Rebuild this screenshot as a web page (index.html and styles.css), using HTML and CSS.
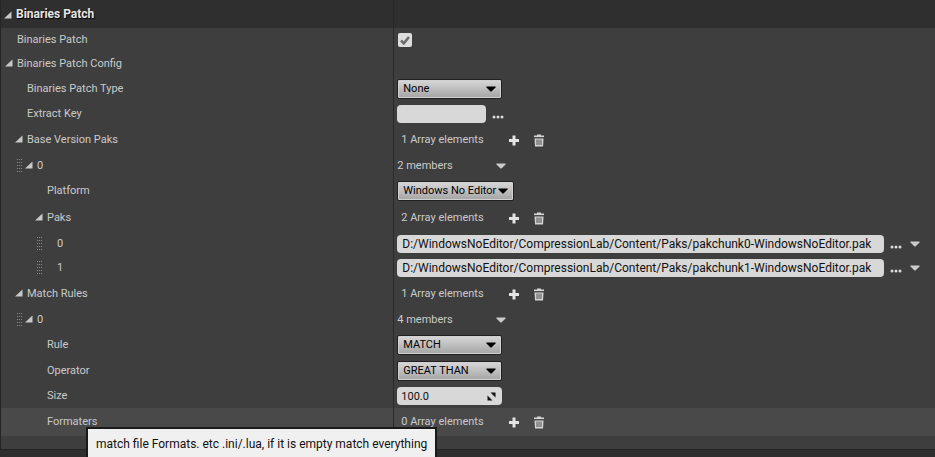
FILE: index.html
```html
<!DOCTYPE html>
<html lang="en">
<head>
<meta charset="utf-8">
<title>Binaries Patch</title>
<link rel="stylesheet" href="styles.css">
</head>
<body>
<svg class="defs" aria-hidden="true">
  <symbol id="tri" viewBox="0 0 8 8"><path d="M7.500 0.500V7.500H0z" fill="#c8c8c8"/></symbol>
  <symbol id="down" viewBox="0 0 10 6"><path d="M0.500 0.500h9v1L5.500 5.500h-1L0.500 1.500z" fill="currentColor"/></symbol>
  <symbol id="plus" viewBox="0 0 12 12"><path d="M4.500 1h3v3.500H11v3H7.500V11h-3V7.500H1v-3h3.500z" fill="#e4e4e4"/></symbol>
  <symbol id="trash" viewBox="0 0 12 13"><path d="M4 1.500V.5h4v1h3V4H1V1.500z" fill="#d4d4d4"/><path d="M1.500 4.500h9L10 12.500H2z" fill="#d4d4d4"/><path d="M1 3.500h10M4 5.500v5.500M6 5.500v5.500M8 5.500v5.500" stroke="#3e3e3e" stroke-width="0.900"/></symbol>
  <symbol id="dots" viewBox="0 0 12 4"><circle cx="2" cy="2" r="1.500"/><circle cx="6" cy="2" r="1.500"/><circle cx="10" cy="2" r="1.500"/></symbol>
  <symbol id="grip" viewBox="0 0 5 14"><path d="M.5 0v14M2.500 0v14M4.500 0v14" stroke="#8a8a8a" stroke-dasharray="1 2"/></symbol>
</svg>
<main class="panel">
  <header class="row heading">
    <div class="name l0"><button class="toggle" aria-label="Collapse Binaries Patch"><svg><use href="#tri"/></svg></button><h1>Binaries Patch</h1></div>
    <div class="value"></div>
  </header>
  <div class="row">
    <div class="name l0 leaf"><label for="patch">Binaries Patch</label></div>
    <div class="value"><span class="check"><input type="checkbox" id="patch" checked><svg viewBox="0 0 14 14"><path d="M3 7.500l2.800 2.800L11 4" fill="none" stroke="#6c6c6c" stroke-width="2.500"/></svg></span></div>
  </div>
  <div class="row">
    <div class="name l0"><button class="toggle" aria-label="Collapse Binaries Patch Config"><svg><use href="#tri"/></svg></button><span>Binaries Patch Config</span></div>
    <div class="value"></div>
  </div>
  <div class="row mid">
    <div class="name l1 leaf"><label for="type">Binaries Patch Type</label></div>
    <div class="value"><span class="combo"><select id="type"><option>None</option></select><svg><use href="#down"/></svg></span></div>
  </div>
  <div class="row">
    <div class="name l1 leaf"><label for="key">Extract Key</label></div>
    <div class="value"><input class="text short" type="text" id="key"><button class="more" aria-label="Browse"><svg><use href="#dots"/></svg></button></div>
  </div>
  <div class="row tall">
    <div class="name l1"><button class="toggle" aria-label="Collapse Base Version Paks"><svg><use href="#tri"/></svg></button><span>Base Version Paks</span></div>
    <div class="value array"><span class="count">1 Array elements</span><button class="tool" aria-label="Add element"><svg><use href="#plus"/></svg></button><button class="tool" aria-label="Remove all"><svg><use href="#trash"/></svg></button></div>
  </div>
  <div class="row">
    <div class="name g2"><svg class="grip"><use href="#grip"/></svg><button class="toggle" aria-label="Collapse element 0"><svg><use href="#tri"/></svg></button><span>0</span></div>
    <div class="value"><span class="members">2 members</span><button class="menu" aria-label="Element options"><svg><use href="#down"/></svg></button></div>
  </div>
  <div class="row mid">
    <div class="name l3 leaf"><label for="platform">Platform</label></div>
    <div class="value"><span class="combo wide"><select id="platform"><option>Windows No Editor</option></select><svg><use href="#down"/></svg></span></div>
  </div>
  <div class="row tall">
    <div class="name l3"><button class="toggle" aria-label="Collapse Paks"><svg><use href="#tri"/></svg></button><span>Paks</span></div>
    <div class="value array"><span class="count">2 Array elements</span><button class="tool" aria-label="Add element"><svg><use href="#plus"/></svg></button><button class="tool" aria-label="Remove all"><svg><use href="#trash"/></svg></button></div>
  </div>
  <div class="row">
    <div class="name g4 leaf"><svg class="grip"><use href="#grip"/></svg><label for="pak0">0</label></div>
    <div class="value"><input class="text path" type="text" id="pak0" value="D:/WindowsNoEditor/CompressionLab/Content/Paks/pakchunk0-WindowsNoEditor.pak"><button class="more" aria-label="Browse"><svg><use href="#dots"/></svg></button><button class="menu" aria-label="Element options"><svg><use href="#down"/></svg></button></div>
  </div>
  <div class="row">
    <div class="name g4 leaf"><svg class="grip"><use href="#grip"/></svg><label for="pak1">1</label></div>
    <div class="value"><input class="text path" type="text" id="pak1" value="D:/WindowsNoEditor/CompressionLab/Content/Paks/pakchunk1-WindowsNoEditor.pak"><button class="more" aria-label="Browse"><svg><use href="#dots"/></svg></button><button class="menu" aria-label="Element options"><svg><use href="#down"/></svg></button></div>
  </div>
  <div class="row tall">
    <div class="name l1"><button class="toggle" aria-label="Collapse Match Rules"><svg><use href="#tri"/></svg></button><span>Match Rules</span></div>
    <div class="value array"><span class="count">1 Array elements</span><button class="tool" aria-label="Add element"><svg><use href="#plus"/></svg></button><button class="tool" aria-label="Remove all"><svg><use href="#trash"/></svg></button></div>
  </div>
  <div class="row">
    <div class="name g2"><svg class="grip"><use href="#grip"/></svg><button class="toggle" aria-label="Collapse rule 0"><svg><use href="#tri"/></svg></button><span>0</span></div>
    <div class="value"><span class="members">4 members</span><button class="menu" aria-label="Element options"><svg><use href="#down"/></svg></button></div>
  </div>
  <div class="row mid">
    <div class="name l3 leaf"><label for="rule">Rule</label></div>
    <div class="value"><span class="combo"><select id="rule"><option>MATCH</option></select><svg><use href="#down"/></svg></span></div>
  </div>
  <div class="row mid">
    <div class="name l3 leaf"><label for="operator">Operator</label></div>
    <div class="value"><span class="combo"><select id="operator"><option>GREAT THAN</option></select><svg><use href="#down"/></svg></span></div>
  </div>
  <div class="row">
    <div class="name l3 leaf"><label for="size">Size</label></div>
    <div class="value"><span class="spin"><input class="text" type="text" inputmode="decimal" id="size" value="100.0"><svg viewBox="0 0 9 9"><path d="M3.500 0.500H8.500V5.500zM0.500 3.500L5.500 8.500H0.500z" fill="#111"/></svg></span></div>
  </div>
  <div class="row tall hover">
    <div class="name l3 leaf"><span>Formaters</span></div>
    <div class="value array"><span class="count">0 Array elements</span><button class="tool" aria-label="Add element"><svg><use href="#plus"/></svg></button><button class="tool" aria-label="Remove all"><svg><use href="#trash"/></svg></button></div>
    <div class="tooltip" role="tooltip">match file Formats. etc .ini/.lua, if it is empty match everything</div>
  </div>
</main>
</body>
</html>
```
FILE: styles.css
```css
* { box-sizing: border-box; }

html { height: 100%; overflow: hidden; }

body {
  margin: 0;
  min-height: 100%;
  overflow: hidden;
  background: #2e2e2e;
  color: #cacaca;
  font: 11px/16px Roboto, sans-serif;
}

.defs { position: absolute; width: 0; height: 0; }

svg { display: block; flex: none; }

button {
  display: flex;
  align-items: center;
  flex: none;
  margin: 0;
  padding: 0;
  border: 0;
  background: none;
  color: inherit;
}

.panel {
  padding-bottom: 13px;
  border-left: 1px solid #252525;
  border-bottom: 1px solid #242424;
  background: #3e3e3e;
}

.row {
  position: relative;
  display: grid;
  grid-template-columns: 42% 1fr;
  height: 24px;
}

.mid { height: 26px; }
.tall, .heading { height: 28px; }
.heading { background: #2f2f2f; }
.hover { background: #494949; }

.name, .value { display: flex; align-items: center; min-width: 0; }

.value {
  padding-left: 3px;
  border-left: 1px solid #292929;
}

.l0 { padding-left: 4px; }
.l1 { padding-left: 14px; }
.l3 { padding-left: 34px; }
.g2 { padding-left: 16px; }
.g4 { padding-left: 36px; }

.leaf > label, .leaf > span { margin-left: 12px; }

.heading .name { padding-left: 3px; }

h1 {
  margin: 0;
  color: #e6e6e6;
  font-size: 12px;
  font-weight: 700;
  text-shadow: 1px 1px 1px #000;
}

.toggle { width: 12px; height: 16px; align-items: flex-start; padding-top: 3px; }
.toggle svg { width: 8px; height: 8px; }
.heading .toggle { padding-top: 5px; }

.grip { width: 5px; height: 14px; margin-right: 3px; }

.check { display: grid; margin-left: 1px; }
.check input, .check svg { grid-area: 1 / 1; width: 14px; height: 14px; }
.check input { appearance: none; margin: 0; border-radius: 2px; background: #dedede; }
.check svg { pointer-events: none; }

.combo {
  display: grid;
  align-items: center;
  width: 105px;
  height: 20px;
  color: #000;
}

.combo.wide { width: 117px; }

.combo select {
  grid-area: 1 / 1;
  appearance: none;
  width: 100%;
  height: 100%;
  padding: 0 0 0 5px;
  border: 1px solid #222;
  border-radius: 2px;
  background: linear-gradient(#d8d8d8, #a4a4a4);
  box-shadow: inset 0 0 0 1px #d0d0d0;
  color: #000;
  font: inherit;
}

.combo svg {
  grid-area: 1 / 1;
  justify-self: end;
  width: 10px;
  height: 6px;
  margin-right: 6px;
  pointer-events: none;
}

.text {
  height: 18px;
  padding: 0 4px;
  border: 0;
  border-radius: 4px;
  background: #d8d8d8;
  color: #111;
  font: inherit;
}

.short { width: 89px; }
.path { flex: 1; min-width: 0; padding-left: 5px; font-size: 12px; }

.more { align-items: flex-end; width: 12px; height: 10px; margin-left: 6px; fill: #dcdcdc; }
.more svg { width: 12px; height: 4px; }

.members { width: 99px; }
.menu svg { width: 10px; height: 6px; }
.path ~ .menu { margin: 0 15px 0 8px; }

.array { padding-left: 7px; }
.count { width: 107px; }
.tool { width: 25px; }
.tool svg { width: 12px; height: 13px; }

.spin { display: grid; align-items: center; width: 105px; }
.spin input { grid-area: 1 / 1; width: 100%; }
.spin svg { grid-area: 1 / 1; justify-self: end; width: 9px; height: 9px; margin-right: 6px; }

.tooltip {
  position: absolute;
  top: 19px;
  left: 85px;
  padding: 7px 8px;
  border: 2px solid #1a1a1a;
  background: #f0f0f0;
  color: #111;
  font-size: 12px;
  white-space: nowrap;
}
```
